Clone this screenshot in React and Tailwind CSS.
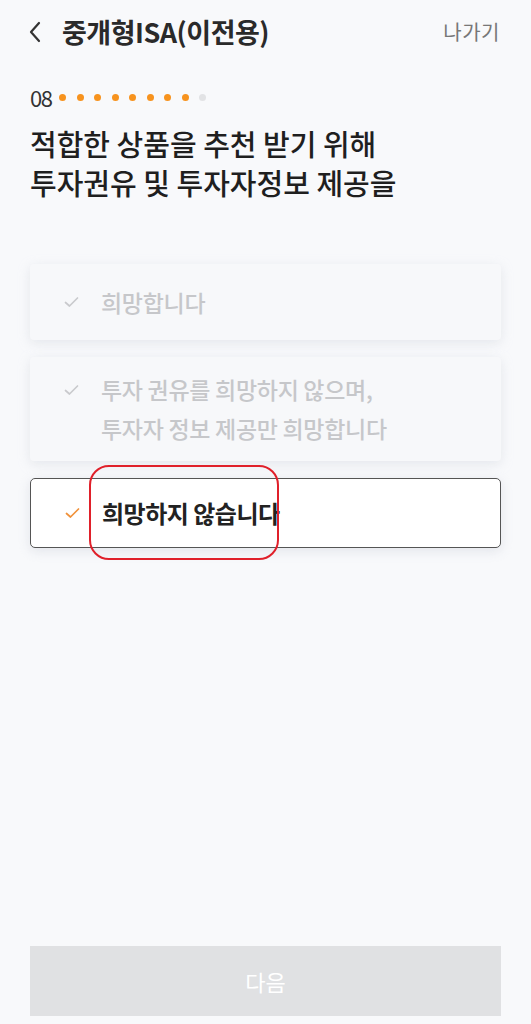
const OPTIONS = [
  { key: 'yes', lines: ['희망합니다'], box: 'h-[76px] items-center' },
  { key: 'info', lines: ['투자 권유를 희망하지 않으며,', '투자자 정보 제공만 희망합니다'], box: 'items-start py-[13px]' },
];

function Check({ color }) {
  return (
    <svg width="15" height="12" viewBox="0 0 15 12" fill="none" className="shrink-0">
      <path d="M1.5 6.5 L5.5 10 L13.5 2" stroke={color} strokeWidth="1.7" strokeLinecap="round" strokeLinejoin="round" />
    </svg>
  );
}

export default function App() {
  return (
    <div
      className="flex min-h-[1024px] w-[531px] flex-col bg-[#f8f9fb] text-[#222]"
      style={{ fontFamily: '"Noto Sans CJK KR", "Noto Sans", sans-serif' }}
    >
      {/* header */}
      <div className="flex h-[64px] items-center pl-[28px] pr-[31px]">
        <svg width="14" height="22" viewBox="0 0 14 22" fill="none" className="mr-[20px]">
          <path d="M11 2 L3 11 L11 20" stroke="#333" strokeWidth="2.2" strokeLinecap="round" strokeLinejoin="round" />
        </svg>
        <h1 className="text-[27px] font-bold tracking-[-0.5px] text-[#2a2a2a]">중개형ISA(이전용)</h1>
        <span className="ml-auto text-[20px] tracking-[0.5px] text-[#777]">나가기</span>
      </div>

      {/* progress */}
      <div className="mt-[17px] flex items-center px-[30px]">
        <span className="text-[22px] tracking-[-1.5px] text-[#333]">08</span>
        <div className="ml-[8px] flex items-center gap-[10.5px]">
          {Array.from({ length: 9 }).map((_, i) => (
            <span key={i} className={i < 8 ? 'h-[7px] w-[7px] rounded-full bg-[#f7931e]' : 'h-[7px] w-[7px] rounded-full bg-[#e2e3e5]'} />
          ))}
        </div>
      </div>

      <h2 className="mt-[10px] px-[30px] text-[29px] font-medium leading-[39px] tracking-[0px] text-[#1f1f1f]">
        적합한 상품을 추천 받기 위해
        <br />
        투자권유 및 투자자정보 제공을
      </h2>

      {/* options */}
      <div className="mt-[62px] flex flex-col gap-[17px] px-[30px]">
        {OPTIONS.map((o) => (
          <div
            key={o.key}
            className={`flex gap-[22px] rounded-[4px] bg-[#f7f8fa] px-[34px] shadow-[0_3px_12px_rgba(200,205,215,0.4)] ${o.box}`}
          >
            <div className="flex h-[39px] items-center">
              <Check color="#c9cacd" />
            </div>
            <p className="text-[23px] font-medium leading-[39px] tracking-[-0.3px] text-[#c6c7ca]">
              {o.lines.map((l, i) => (
                <span key={i} className="block">{l}</span>
              ))}
            </p>
          </div>
        ))}

        <div className="relative flex h-[70px] items-center gap-[22px] rounded-[5px] border border-[#555] bg-white px-[34px] shadow-[0_3px_12px_rgba(200,205,215,0.45)]">
          <Check color="#f0913a" />
          <span className="text-[24px] font-bold tracking-[-0.5px] text-[#222]">희망하지 않습니다</span>
          <div className="pointer-events-none absolute left-[58px] top-[-14px] h-[95px] w-[190px] rounded-[20px] border-[2.5px] border-[#e0202a]" />
        </div>
      </div>

      <div className="flex-1" />

      {/* next button */}
      <div className="px-[30px] pb-[8px]">
        <button className="flex h-[70px] w-full items-center justify-center bg-[#e0e1e3] text-[22px] text-white">다음</button>
      </div>
    </div>
  );
}
